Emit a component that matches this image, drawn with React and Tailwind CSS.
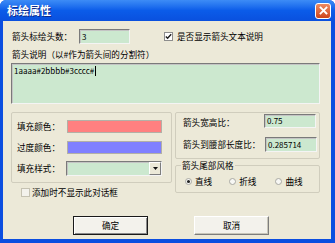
import React from 'react';

const font = { fontFamily: '"Noto Sans CJK SC", "Noto Sans", sans-serif' };

const sunken = "border border-t-[#7a7a7a] border-l-[#7a7a7a] border-b-[#f4f4f4] border-r-[#f4f4f4] shadow-[inset_1px_1px_0_#c4c4c4]";

const Field = ({ value, className }) => (
    <div className={`${sunken} bg-[#cce8cf] flex items-center pl-[2px] text-[8px] leading-none ${className}`}>
        {value}
    </div>
);

const Check = ({ checked, faded }) => (
    <span className={`w-[9px] h-[9px] shrink-0 flex items-center justify-center border ${faded ? 'border-[#c5c2b2] bg-[#f3f2ec]' : 'border-[#8d8d8d] bg-white'}`}>
        {checked && (
            <svg width="7" height="7" viewBox="0 0 7 7">
                <path d="M0.8 3.4 L2.6 5.3 L6.2 1.2" fill="none" stroke="#1f1f1f" strokeWidth="1.4" />
            </svg>
        )}
    </span>
);

const Radio = ({ on }) => (
    <span className="w-[7px] h-[7px] shrink-0 rounded-full border border-[#a9a9a3] bg-[#f7f7f4] flex items-center justify-center">
        {on && <span className="w-[3px] h-[3px] rounded-full bg-[#222]" />}
    </span>
);

const Button = ({ label, primary }) => (
    <div className={`w-[75px] h-[19px] flex items-center justify-center text-[8.6px] bg-[#f3f2ec] ${primary ? 'border border-[#1a1a1a] shadow-[inset_1px_1px_0_#fff,inset_-1px_-1px_0_#8a8a8a]' : 'border border-t-white border-l-white border-b-[#7d7d7d] border-r-[#7d7d7d] shadow-[inset_-1px_-1px_0_#c8c6b9]'}`}>
        {label}
    </div>
);

const App = () => {
    return (
        <div className="w-[335px] h-[243px] bg-[#0b4ee0] rounded-t-[6px] flex flex-col overflow-hidden text-black" style={font}>
            {/* title bar */}
            <div className="h-[21px] shrink-0 flex items-center justify-between pl-[7px] pr-[4px] bg-linear-to-b from-[#3d8cf6] via-[#0b5ce9] to-[#0a50de]">
                <span className="text-white font-bold text-[11px] leading-none [text-shadow:1px_1px_0_#0b2a8a]">标绘属性</span>
                <div className="w-[16px] h-[16px] rounded-[3px] border border-white bg-linear-to-b from-[#ee8a62] to-[#cc4318] flex items-center justify-center">
                    <svg width="9" height="9" viewBox="0 0 9 9">
                        <path d="M1.5 1.5 L7.5 7.5 M7.5 1.5 L1.5 7.5" stroke="#fff" strokeWidth="1.8" strokeLinecap="square" />
                    </svg>
                </div>
            </div>

            {/* body */}
            <div className="flex-1 ml-[3px] mr-[4px] mb-[4px] bg-[#ece9d8] pl-[8px] pr-[11px] pt-[8px] text-[8.6px] leading-[11px]">
                <div className="flex items-center h-[15px]">
                    <span className="w-[68px] pl-[1px]">箭头标绘头数：</span>
                    <Field value="3" className="w-[51px] h-[15px]" />
                    <span className="ml-[34px]"><Check checked /></span>
                    <span className="ml-[4px]">是否显示箭头文本说明</span>
                </div>

                <div className="mt-[5px] h-[11px] pl-[1px]">箭头说明（以#作为箭头间的分割符）</div>

                <div className={`${sunken} mt-[3px] h-[41px] bg-[#cce8cf] pl-[2px] pt-[2px] text-[8px] leading-[10px] flex items-start`}>
                    <span>1aaaa#2bbbb#3cccc#</span>
                    <span className="w-px h-[10px] bg-black ml-px" />
                </div>

                <div className="mt-[8px] flex items-start gap-[3px]">
                    {/* left column */}
                    <div className="w-[161px]">
                        <div className="h-[71px] border border-[#d0cdbd] rounded-[2px] pt-[7px] pl-[5px] pr-[9px]">
                            <div className="flex items-center h-[13px]">
                                <span className="w-[50px]">填充颜色：</span>
                                <div className="flex-1 h-[13px] bg-[#ff8080] border border-[#b3b0a6]" />
                            </div>
                            <div className="flex items-center h-[13px] mt-[8px]">
                                <span className="w-[50px]">过度颜色：</span>
                                <div className="flex-1 h-[13px] bg-[#8080ff] border border-[#b3b0a6]" />
                            </div>
                            <div className="flex items-center h-[15px] mt-[7px]">
                                <span className="w-[49px]">填充样式：</span>
                                <div className={`${sunken} flex-1 h-[15px] bg-[#cce8cf] flex justify-end`}>
                                    <div className="w-[12px] h-full bg-[#ece9d8] border border-t-white border-l-white border-b-[#7d7d7d] border-r-[#7d7d7d] flex items-center justify-center">
                                        <svg width="5" height="3" viewBox="0 0 5 3">
                                            <path d="M0 0 H5 L2.5 3 Z" fill="#111" />
                                        </svg>
                                    </div>
                                </div>
                            </div>
                        </div>
                        <div className="mt-[4px] h-[11px] flex items-center pl-[10px]">
                            <Check faded />
                            <span className="ml-[2px]">添加时不显示此对话框</span>
                        </div>
                    </div>

                    {/* right column */}
                    <div className="w-[145px]">
                        <div className="h-[47px] border border-[#d0cdbd] rounded-[2px] pt-[1px] pl-[7px] pr-[3px]">
                            <div className="flex items-center justify-between h-[14px]">
                                <span className="mt-[3px]">箭头宽高比：</span>
                                <Field value="0.75" className="w-[52px] h-[14px]" />
                            </div>
                            <div className="flex items-center justify-between h-[15px] mt-[9px]">
                                <span className="-mt-[1px]">箭头到腰部长度比：</span>
                                <Field value="0.285714" className="w-[52px] h-[15px] -mr-px" />
                            </div>
                        </div>
                        <fieldset className="mt-[1px] border border-[#d0cdbd] rounded-[2px] pb-[5px]">
                            <legend className="ml-[5px] px-[1px] h-[11px]">箭头尾部风格</legend>
                            <div className="mt-[5px] h-[11px] flex items-center pl-[9px]">
                                <Radio on />
                                <span className="ml-[3px]">直线</span>
                                <span className="ml-[17px]"><Radio /></span>
                                <span className="ml-[3px]">折线</span>
                                <span className="ml-[19px]"><Radio /></span>
                                <span className="ml-[3px]">曲线</span>
                            </div>
                        </fieldset>
                    </div>
                </div>

                <div className="mt-[18px] flex pl-[62px] gap-[46px]">
                    <Button label="确定" primary />
                    <Button label="取消" />
                </div>
            </div>
        </div>
    );
};

export default App;
